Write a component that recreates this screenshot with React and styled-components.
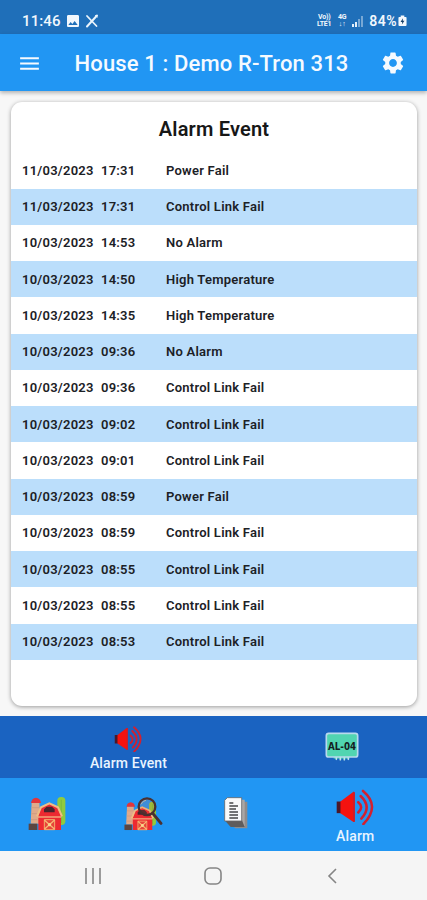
import React from 'react';
import styled, { createGlobalStyle } from 'styled-components';
import { MdMenu, MdSettings, MdImage } from 'react-icons/md';

const events = [
  ['11/03/2023', '17:31', 'Power Fail'],
  ['11/03/2023', '17:31', 'Control Link Fail'],
  ['10/03/2023', '14:53', 'No Alarm'],
  ['10/03/2023', '14:50', 'High Temperature'],
  ['10/03/2023', '14:35', 'High Temperature'],
  ['10/03/2023', '09:36', 'No Alarm'],
  ['10/03/2023', '09:36', 'Control Link Fail'],
  ['10/03/2023', '09:02', 'Control Link Fail'],
  ['10/03/2023', '09:01', 'Control Link Fail'],
  ['10/03/2023', '08:59', 'Power Fail'],
  ['10/03/2023', '08:59', 'Control Link Fail'],
  ['10/03/2023', '08:55', 'Control Link Fail'],
  ['10/03/2023', '08:55', 'Control Link Fail'],
  ['10/03/2023', '08:53', 'Control Link Fail'],
];

//Icons
const Speaker = ({ width, height }) => (
  <svg width={width} height={height} viewBox="0 0 114 104" fill="none">
    <path d="M2 36h14v34H2z" fill="#4b1728" />
    <path d="M13 36 50 8q5-2 5 4v80q0 6-5 3L13 70z" fill="#f5120f" />
    <path d="M50 8q5-2 5 4v80q0 6-5 3z" fill="#c5212f" />
    <g stroke="#d3202f" strokeWidth="7.500" strokeLinecap="round">
      <path d="M65 38q17 14 0 30" />
      <path d="M72 20q34 32 2 66" />
      <path d="M79 5q52 44 1 97" />
    </g>
  </svg>
);

const Barn = () => (
  <g>
    <rect x="112" y="36" width="24" height="84" rx="11" fill="#8fcb3e" />
    <path d="M124 44v70" stroke="#80bd3c" strokeWidth="4" />
    <path d="M35 52h23l4 64H32z" fill="#dfaa8b" />
    <path d="M35 68h22M34 86h21M33 104h19" stroke="#d09c80" strokeWidth="3" />
    <path d="M33 54q2-15 15-16 13 1 15 16z" fill="#e2353b" />
    <path d="M26 116h26v19H26z" fill="#5c4541" />
    <path d="M55 92 64 68l24-11 24 11 11 24v43H55z" fill="#ed2a31" />
    <path d="M51 94 63 67l25-12 26 12 12 27" stroke="#f0bd83" strokeWidth="6" fill="none" />
    <path d="M54 96h70" stroke="#f5b582" strokeWidth="4" />
    <path d="M72 82V73l8-8h16l8 8v9z" fill="#49242c" />
    <path d="M73 104h31v30H73z" fill="#e6453a" stroke="#f3ae6c" strokeWidth="3" />
    <path d="m73 105 31 28m0-28-31 28" stroke="#f6b974" strokeWidth="4" />
    <circle cx="88.500" cy="119" r="5" fill="#f8d58c" />
  </g>
);

const HouseIcon = () => (
  <svg width="60" height="55" viewBox="-9 0 180 165">
    <Barn />
  </svg>
);

const HouseSearchIcon = () => (
  <svg width="60" height="55" viewBox="-9 0 180 165">
    <g transform="translate(6 19) scale(.86)">
      <Barn />
    </g>
    <circle cx="96" cy="65" r="25" fill="#ec613c" fillOpacity=".15" stroke="#4a3030" strokeWidth="7" />
    <path d="m114 86 24 29" stroke="#4a3030" strokeWidth="9" strokeLinecap="round" />
    <path d="M78 58q5-11 15-12" stroke="#b9b0a5" strokeWidth="3" fill="none" />
  </svg>
);

const PapersIcon = () => (
  <svg width="24" height="32" viewBox="0 0 72 96">
    <path d="M18 14h52v80H32z" fill="#8f8c8b" />
    <path d="M10 8h52v80H24z" fill="#aaa7a5" />
    <path d="M2 70 20 90h42L54 70z" fill="#5f5c5c" />
    <path d="M10 2h43v70H2V10z" fill="#fafafa" stroke="#68696b" strokeWidth="2.500" />
    <path d="M16 18h12M16 27h26M16 36h20M16 45h26M16 54h26M16 63h26" stroke="#48484a" strokeWidth="4" />
  </svg>
);

const ModuleIcon = () => (
  <svg width="34" height="29" viewBox="0 0 102 87">
    <path d="M26 74h47v6H26z" fill="#43cda9" />
    <path d="M34 75v7M46 75v8M58 75v8M70 75v7" stroke="#b9e8ea" strokeWidth="5" strokeLinecap="round" />
    <rect x="4" y="4" width="94" height="71" rx="7" fill="#51d5b1" stroke="#b8d9ed" strokeWidth="5" />
    <text x="51" y="54" textAnchor="middle" textLength="84" lengthAdjust="spacingAndGlyphs"
      fontFamily="DejaVu Sans" fontSize="29" fontWeight="700" fill="#14201f">AL-04</text>
  </svg>
);

const Pencils = () => (
  <svg width="14" height="14" viewBox="0 0 14 14" fill="none" stroke="#eaf4fc" strokeLinecap="round">
    <path d="m2 2 9.500 10" strokeWidth="1.800" />
    <path d="M12 1.500 2 12.500" strokeWidth="2" />
    <path d="m10.500 1.500 2 1.500" strokeWidth="1" />
  </svg>
);

const Signal = () => (
  <svg width="12" height="12" viewBox="0 0 12 12">
    <path d="M0 9h2v3H0zM3 7h2v5H3z" fill="#e3effa" />
    <path d="M6 4h2v8H6zM9 1h2v11H9z" fill="#78a8d5" />
  </svg>
);

const Battery = () => (
  <svg width="9" height="12" viewBox="0 0 10 12">
    <path d="M3 0h4v1.500h1.500q1 0 1 1v8q0 1-1 1h-7q-1 0-1-1v-8q0-1 1-1H3z" fill="#f3f8fd" />
    <path d="M5.500 3 2.800 7h1.900l-.4 3 2.900-4.200H5.300z" fill="#153d66" />
  </svg>
);

const App = () => {
  return (
    <StyledPhone>
      <GlobalStyle />
      <StyledStatus>
        <StyledCluster $gap="4px">
          <StyledClock>11:46</StyledClock>
          <MdImage size={16} />
          <Pencils />
        </StyledCluster>
        <StyledCluster $gap="5px">
          <StyledNetwork $width="16px"><span>Vo))</span><span>LTE1</span></StyledNetwork>
          <StyledNetwork $width="10px"><span>4G</span><span>↓↑</span></StyledNetwork>
          <Signal />
          <StyledCharge>84%<Battery /></StyledCharge>
        </StyledCluster>
      </StyledStatus>
      <StyledHeader>
        <MdMenu size={25} />
        <h1>House 1 : Demo R-Tron 313</h1>
        <MdSettings size={26} />
      </StyledHeader>
      <StyledMain>
        <StyledCard>
          <h2>Alarm Event</h2>
          {events.map(([date, time, label], i) => (
            <StyledRow key={i} $shaded={i % 2 === 1}>
              <span>{date}</span>
              <span>{time}</span>
              <span>{label}</span>
            </StyledRow>
          ))}
        </StyledCard>
      </StyledMain>
      <StyledTabs>
        <StyledTab>
          <Speaker width={29} height={26} />
          <StyledLabel>Alarm Event</StyledLabel>
        </StyledTab>
        <StyledTab $single>
          <ModuleIcon />
        </StyledTab>
      </StyledTabs>
      <StyledNav>
        <StyledNavItem $top="7px"><HouseIcon /></StyledNavItem>
        <StyledNavItem $top="7px"><HouseSearchIcon /></StyledNavItem>
        <StyledNavItem $top="19px"><PapersIcon /></StyledNavItem>
        <StyledNavItem $top="11px">
          <Speaker width={39} height={36} />
          <StyledLabel>Alarm</StyledLabel>
        </StyledNavItem>
      </StyledNav>
      <StyledSystem>
        <svg width="18" height="18" viewBox="0 0 18 18"><path d="M2 1v16M9 1v16M16 1v16" /></svg>
        <svg width="18" height="18" viewBox="0 0 18 18"><rect x="1" y="1" width="16" height="16" rx="5" /></svg>
        <svg width="18" height="18" viewBox="0 0 18 18"><path d="m12 2-7 7 7 7" /></svg>
      </StyledSystem>
    </StyledPhone>
  );
};

const GlobalStyle = createGlobalStyle`
  * {
    box-sizing: border-box;
    margin: 0;
    padding: 0;
  }
  body {
    font-family: Roboto, sans-serif;
    background: #f5f5f5;
  }
  svg {
    display: block;
    flex-shrink: 0;
  }
`;

const StyledPhone = styled.div`
  width: 427px;
  height: 900px;
  display: flex;
  flex-direction: column;
  overflow: hidden;
`;

const StyledStatus = styled.div`
  height: 34px;
  padding: 7px 20px 0 22px;
  display: flex;
  justify-content: space-between;
  background: #1f6fb9;
  color: #f1f7fd;
`;

const StyledCluster = styled.div`
  height: 27px;
  display: flex;
  align-items: center;
  gap: ${(props) => props.$gap};
`;

const StyledClock = styled.span`
  width: 39px;
  font-size: 15px;
  font-weight: 500;
  letter-spacing: 0.1px;
`;

const StyledNetwork = styled.div`
  width: ${(props) => props.$width};
  display: flex;
  flex-direction: column;
  align-items: center;
  font-size: 7px;
  line-height: 6.5px;
  font-weight: 700;
  letter-spacing: -0.2px;
`;

const StyledCharge = styled.div`
  display: flex;
  align-items: center;
  gap: 1px;
  font-size: 14px;
  font-weight: 600;
  letter-spacing: 0.5px;
`;

const StyledHeader = styled.header`
  height: 57px;
  padding: 1px 21px 0 17px;
  display: flex;
  align-items: center;
  justify-content: space-between;
  flex-shrink: 0;
  background: #2196f3;
  color: #f5faff;
  box-shadow: 0 2px 4px rgba(0, 0, 0, 0.28);
  z-index: 1;
  h1 {
    padding-left: 1px;
    font-size: 22px;
    font-weight: 500;
    letter-spacing: 0.13px;
    white-space: nowrap;
  }
`;

const StyledMain = styled.main`
  height: 625px;
  padding: 11px 10px 10px 11px;
  background: #f7f7f7;
`;

const StyledCard = styled.section`
  height: 604px;
  border-radius: 11px;
  background: #fff;
  box-shadow: 0 1px 4px rgba(0, 0, 0, 0.38);
  overflow: hidden;
  h2 {
    height: 50.25px;
    padding-top: 2px;
    line-height: 50px;
    text-align: center;
    font-size: 20px;
    font-weight: 600;
    letter-spacing: 0.2px;
    color: #171717;
  }
`;

const StyledRow = styled.div`
  height: 36.25px;
  padding-left: 11px;
  display: grid;
  grid-template-columns: 79px 65px 1fr;
  align-items: center;
  background: ${(props) => (props.$shaded ? '#bbdefb' : '#fff')};
  font-size: 13px;
  font-weight: 600;
  letter-spacing: 0.24px;
  color: #1c2126;
`;

const StyledTabs = styled.div`
  height: 62px;
  display: grid;
  grid-template-columns: 257px 1fr;
  background: #1a63c1;
`;

const StyledTab = styled.div`
  padding-top: ${(props) => (props.$single ? '16px' : '10px')};
  display: flex;
  flex-direction: column;
  align-items: center;
`;

const StyledNav = styled.nav`
  height: 73px;
  display: grid;
  grid-template-columns: 94.5px 94.5px 94.5px 1fr;
  background: #2196f3;
`;

const StyledNavItem = styled.div`
  padding-top: ${(props) => props.$top};
  display: flex;
  flex-direction: column;
  align-items: center;
`;

const StyledLabel = styled.span`
  margin-top: 2px;
  font-size: 14px;
  line-height: 18px;
  font-weight: 500;
  letter-spacing: 0.15px;
  color: #e9f4ff;
`;

const StyledSystem = styled.div`
  height: 49px;
  padding: 0 85px 0 84px;
  display: flex;
  align-items: center;
  justify-content: space-between;
  background: #f5f5f5;
  svg {
    fill: none;
    stroke: #858585;
    stroke-width: 1.6;
  }
`;

export default App;
